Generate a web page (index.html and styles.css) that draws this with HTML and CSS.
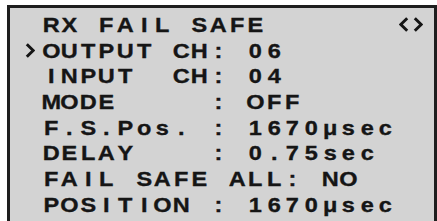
FILE: index.html
```html
<!DOCTYPE html>
<html>
<head>
	<title>RX Fail Safe</title>
	<link rel="stylesheet" href="styles.css">
</head>
<body>

<div class="lcd">
	<div class="lcdRow">
		<span class="lcdCursor"></span>
		<span class="lcdText">RX FAIL SAFE</span>
		<span class="lcdArrows">
			<svg width="10" height="15" viewBox="0 0 10 15"><polyline points="8.2,1.2 1.8,7.5 8.2,13.8" /></svg>
			<svg width="10" height="15" viewBox="0 0 10 15"><polyline points="1.8,1.2 8.2,7.5 1.8,13.8" /></svg>
		</span>
	</div>
	<div class="lcdRow">
		<span class="lcdCursor"><svg width="10" height="15" viewBox="0 0 10 15"><polyline points="1.8,1.2 8.2,7.5 1.8,13.8" /></svg></span>
		<span class="lcdText">OUTPUT CH: 06</span>
	</div>
	<div class="lcdRow">
		<span class="lcdCursor"></span>
		<span class="lcdText">INPUT  CH: 04</span>
	</div>
	<div class="lcdRow">
		<span class="lcdCursor"></span>
		<span class="lcdText">MODE     : OFF</span>
	</div>
	<div class="lcdRow">
		<span class="lcdCursor"></span>
		<span class="lcdText">F.S.Pos. : 1670μsec</span>
	</div>
	<div class="lcdRow">
		<span class="lcdCursor"></span>
		<span class="lcdText">DELAY    : 0.75sec</span>
	</div>
	<div class="lcdRow">
		<span class="lcdCursor"></span>
		<span class="lcdText">FAIL SAFE ALL: NO</span>
	</div>
	<div class="lcdRow">
		<span class="lcdCursor"></span>
		<span class="lcdText">POSITION : 1670μsec</span>
	</div>
</div>

<script>
// put every character in its own cell, like the pixel grid of the display
var rows = document.querySelectorAll('.lcdText');
for (var i=0;i<rows.length;i++) {
	var txt = rows[i].textContent;
	rows[i].textContent = '';
	for (var j=0;j<txt.length;j++) {
		var cell = document.createElement('span');
		cell.className = 'lcdCell';
		cell.textContent = txt[j]==' ' ? '\u00a0' : txt[j];
		rows[i].appendChild(cell);
	}
}
</script>
</body>
</html>
```

FILE: styles.css
```css
html, body {margin: 0;padding: 0;background: #fff;overflow: hidden;}

.lcd {
	box-sizing: border-box;
	width: 430px;
	height: 216px;
	margin: 5px 0 0 7px;
	padding: 3.8px 0 0 13.1px;
	border: 3px solid #1e1e1e;
	border-bottom: 0;
	background: #d3d3d3;
	color: #151515;
	font-family: "Liberation Sans", Arial, sans-serif;
	font-weight: bold;
	font-size: 21px;
	-webkit-text-stroke: 0.35px #151515;
}

.lcdRow {display: flex;align-items: center;height: 25.73px;line-height: 25.73px;}
.lcdText {display: flex;}
.lcdCell {display: inline-block;width: 18.6px;text-align: center;transform: scaleX(1.12);}
.lcdCursor {display: flex;align-items: center;width: 18.6px;padding-left: 2px;box-sizing: border-box;}
.lcdArrows {display: flex;gap: 4px;margin-left: auto;margin-right: 11px;}

.lcd svg polyline {fill: none;stroke: #151515;stroke-width: 3;stroke-linejoin: miter;}
```
